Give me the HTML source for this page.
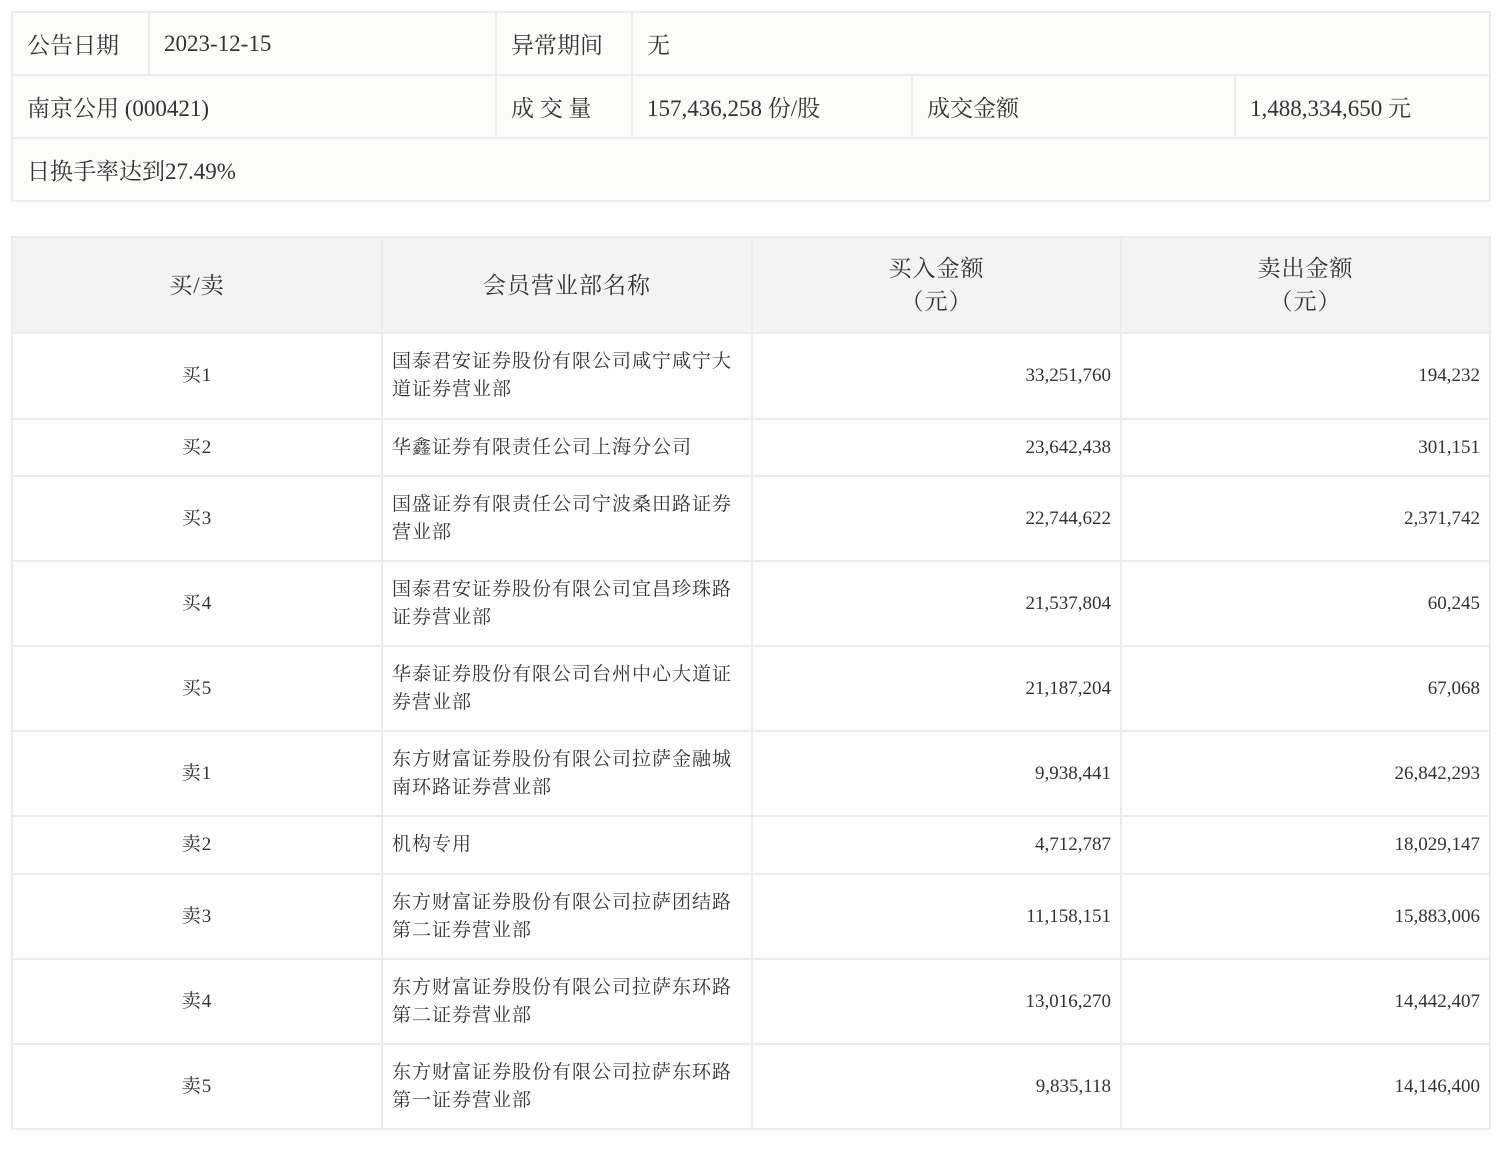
<!DOCTYPE html>
<html><head><meta charset="utf-8"><style>
body{margin:0;background:#fff;width:1502px;height:1150px;font-family:"Noto Serif CJK SC","Liberation Serif",serif;color:#333;}
table{position:absolute;left:11px;border-collapse:collapse;table-layout:fixed;}
td{border:2px solid #ececec;padding:0;}
#t1{top:11px;width:1478px;background:#fcfcfa;font-size:23px;font-family:"Liberation Serif","Noto Serif CJK SC",serif;}
#t1 td{padding-left:14px;height:61px;}
#t2{top:236px;width:1478px;font-size:19px;letter-spacing:1px;font-family:"Liberation Serif","Noto Serif CJK SC",serif;}
#t2 th{background:#f3f3f3;border:2px solid #ececec;font-weight:normal;font-size:23px;height:92px;line-height:33px;}
#t2 td{line-height:28px;}
.c{text-align:center;}
.n{padding-left:9px;padding-right:9px;}
.r{text-align:right;padding-right:9px;letter-spacing:0;}
</style></head><body>
<table id="t1">
<colgroup><col style="width:137px"><col style="width:347px"><col style="width:136px"><col style="width:280px"><col style="width:323px"><col style="width:255px"></colgroup>
<tr><td>公告日期</td><td>2023-12-15</td><td>异常期间</td><td colspan="3">无</td></tr>
<tr><td colspan="2">南京公用 (000421)</td><td>成 交 量</td><td>157,436,258 份/股</td><td>成交金额</td><td>1,488,334,650 元</td></tr>
<tr><td colspan="6">日换手率达到27.49%</td></tr>
</table>
<table id="t2">
<colgroup><col style="width:370px"><col style="width:370px"><col style="width:369px"><col style="width:369px"></colgroup>
<tr><th>买/卖</th><th>会员营业部名称</th><th>买入金额<br>（元）</th><th>卖出金额<br>（元）</th></tr>
<tr style="height:86px"><td class="c">买1</td><td class="n">国泰君安证券股份有限公司咸宁咸宁大道证券营业部</td><td class="r">33,251,760</td><td class="r">194,232</td></tr>
<tr style="height:57px"><td class="c">买2</td><td class="n">华鑫证券有限责任公司上海分公司</td><td class="r">23,642,438</td><td class="r">301,151</td></tr>
<tr style="height:85px"><td class="c">买3</td><td class="n">国盛证券有限责任公司宁波桑田路证券营业部</td><td class="r">22,744,622</td><td class="r">2,371,742</td></tr>
<tr style="height:85px"><td class="c">买4</td><td class="n">国泰君安证券股份有限公司宜昌珍珠路证券营业部</td><td class="r">21,537,804</td><td class="r">60,245</td></tr>
<tr style="height:85px"><td class="c">买5</td><td class="n">华泰证券股份有限公司台州中心大道证券营业部</td><td class="r">21,187,204</td><td class="r">67,068</td></tr>
<tr style="height:85px"><td class="c">卖1</td><td class="n">东方财富证券股份有限公司拉萨金融城南环路证券营业部</td><td class="r">9,938,441</td><td class="r">26,842,293</td></tr>
<tr style="height:58px"><td class="c">卖2</td><td class="n">机构专用</td><td class="r">4,712,787</td><td class="r">18,029,147</td></tr>
<tr style="height:85px"><td class="c">卖3</td><td class="n">东方财富证券股份有限公司拉萨团结路第二证券营业部</td><td class="r">11,158,151</td><td class="r">15,883,006</td></tr>
<tr style="height:85px"><td class="c">卖4</td><td class="n">东方财富证券股份有限公司拉萨东环路第二证券营业部</td><td class="r">13,016,270</td><td class="r">14,442,407</td></tr>
<tr style="height:85px"><td class="c">卖5</td><td class="n">东方财富证券股份有限公司拉萨东环路第一证券营业部</td><td class="r">9,835,118</td><td class="r">14,146,400</td></tr>
</table>
</body></html>
